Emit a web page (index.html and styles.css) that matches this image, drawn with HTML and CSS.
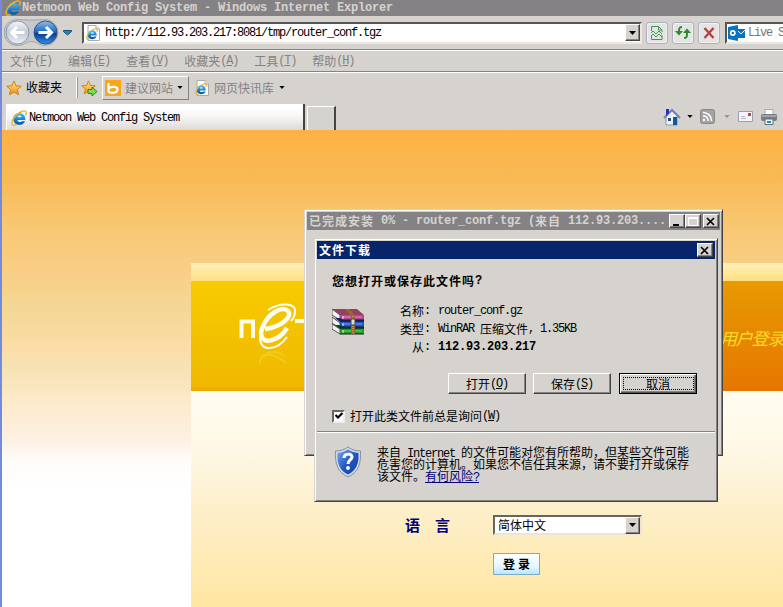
FILE: index.html
```html
<!DOCTYPE html>
<html lang="zh-CN">
<head>
<meta charset="utf-8">
<title>Netmoon Web Config System</title>
<link rel="stylesheet" href="styles.css">
</head>
<body>
<svg width="0" height="0" class="defs">
  <defs>
    <linearGradient id="ieBlue" x1="0" y1="0" x2="0" y2="1"><stop offset="0" stop-color="#48bdf2"/><stop offset=".5" stop-color="#118be0"/><stop offset="1" stop-color="#0552a5"/></linearGradient>
    <linearGradient id="gold" x1="0" y1="0" x2="0" y2="1"><stop offset="0" stop-color="#fff08a"/><stop offset="1" stop-color="#f58a10"/></linearGradient>
    <symbol id="ie" viewBox="0 0 16 16">
      <path d="M14.300 10H6.500c.3 2.600 3.300 2.500 4.200 1.200h3.400C12.200 16.500 2.300 16.300 2.300 9 2.300 1 14.800 1 14.300 10M6.500 7.300h4C10.200 5 6.800 5 6.500 7.300" fill="url(#ieBlue)" fill-rule="evenodd"/>
      <path d="M14.500 5.500C16.500 1.200 14.300-.3 9.700 2 4 4.700-.5 11.500 1.300 14.500c.8 1.300 2.900.5 4.200-.2" fill="none" stroke="#f0b325" stroke-width="1.400"/>
    </symbol>
    <symbol id="iepage" viewBox="0 0 14 16">
      <path d="M2 .5h8l3.500 3.500v11.500H2z" fill="#fff" stroke="#aaa"/><path d="M10 .5V4h3.500" fill="#eee" stroke="#aaa"/>
      <use href="#ie" x="0" y="3" width="12" height="12"/>
    </symbol>
    <symbol id="star" viewBox="0 0 16 16"><path d="M8 1l2 4.800 5.200.4-3.900 3.400 1.200 5.100L8 12l-4.500 2.700 1.200-5.100L.8 6.200 6 5.800z" fill="url(#gold)" stroke="#c98312" stroke-linejoin="round"/></symbol>
    <symbol id="arrow" viewBox="0 0 7 4"><path d="M0 0h7L3.500 4z" fill="currentColor"/></symbol>
    <symbol id="close" viewBox="0 0 10 9"><path d="M1 1l7 7M8 1L1 8" fill="none" stroke="#000" stroke-width="1.700"/></symbol>
  </defs>
</svg>
<div class="browser">
  <header class="titlebar"><svg class="i16"><use href="#ie"/></svg><b class="lb">Netmoon Web Config System - Windows Internet Explorer</b></header>

  <div class="address-row">
    <svg class="nav" width="72" height="30" viewBox="0 0 72 30">
      <defs>
        <linearGradient id="bk" x1="0" y1="0" x2="0" y2="1"><stop offset="0" stop-color="#f5f7f8"/><stop offset=".5" stop-color="#c2cad4"/><stop offset="1" stop-color="#e9f0f6"/></linearGradient>
        <linearGradient id="fw" x1="0" y1="0" x2="0" y2="1"><stop offset="0" stop-color="#91bce9"/><stop offset=".48" stop-color="#1c67bf"/><stop offset=".55" stop-color="#0a3e91"/><stop offset="1" stop-color="#3192e8"/></linearGradient>
      </defs>
      <path d="M13 1.500C20 1.500 22 2 27.500 2S35 1.500 41 1.500a13 13 0 0 1 0 26c-6 0-8-4-13.500-4s-7.500 4-14.500 4a13 13 0 0 1 0-26z" fill="#c5c8cc" stroke="#a2a6ad"/>
      <circle cx="13.500" cy="14.500" r="11.500" fill="url(#bk)" stroke="#8c98a8"/>
      <circle cx="41.500" cy="14.500" r="11.500" fill="url(#fw)" stroke="#315386"/>
      <path d="M20.500 14.500H8M13 9l-5.500 5.500 5.500 5.500" fill="none" stroke="#fff" stroke-width="3"/>
      <path d="M34.500 14.500H47M42 9l5.500 5.500-5.500 5.500" fill="none" stroke="#fff" stroke-width="3"/>
      <path d="M59.500 12.500h8v1l-4 3.500-4-3.500z" fill="#2c83b8" stroke="#124f78"/>
    </svg>
    <div class="field url"><svg width="14" height="16"><use href="#iepage"/></svg><span class="l">http://112.93.203.217:8081/tmp/router_conf.tgz</span><span class="drop"><svg width="7" height="4"><use href="#arrow"/></svg></span></div>
    <div class="tools">
      <span class="tool"><svg width="14" height="16" viewBox="0 0 14 16"><path d="M1.500 6V1.500h7l3.500 3.500v2M1.500 11v3.500H12V10M8.500 1.500V5H12M1 8l2-2 3 3 3-3 3 3M1 11l2-2 3 3 3-3 3 3" fill="none" stroke="#3b9a4c"/></svg></span>
      <span class="tool"><svg width="16" height="14" viewBox="0 0 16 14"><path d="M7 1C4 1 4 3 4 6M9 12c3 0 3-1 3-6" fill="none" stroke="#2c8a2c" stroke-width="2"/><path d="M0 5h8L4 9.500zM8 7h8l-4-4.500z" fill="#2c8a2c"/></svg></span>
      <span class="tool"><svg width="12" height="12" viewBox="0 0 12 12"><path d="M1.500 1l9 10M10.500 1l-9 10" stroke="#b53e3e" stroke-width="2.300"/></svg></span>
    </div>
    <div class="field search"><svg width="17" height="16" viewBox="0 0 17 16"><path d="M0 2l10-2v16L0 14zM10 4h7v9h-7z" fill="#0873c4"/><circle cx="4.800" cy="8" r="2.100" fill="none" stroke="#fff" stroke-width="1.700"/><path d="M10 6l3 3 4-4" fill="none" stroke="#fff"/></svg><span class="l">Live S</span></div>
  </div>

  <nav class="menu">
    <span>文件<i class="l">(<u>F</u>)</i></span><span>编辑<i class="l">(<u>E</u>)</i></span><span>查看<i class="l">(<u>V</u>)</i></span><span>收藏夹<i class="l">(<u>A</u>)</i></span><span>工具<i class="l">(<u>T</u>)</i></span><span>帮助<i class="l">(<u>H</u>)</i></span>
  </nav>

  <div class="favorites">
    <svg class="i16"><use href="#star"/></svg><span class="fav-label">收藏夹</span>
    <svg class="i16 add" viewBox="0 0 16 16"><use href="#star" width="15" height="15"/><path d="M7 9.500h4V7l5 4.500-5 4.500v-2.500H7z" fill="#7ddb4e" stroke="#278b20"/></svg>
    <span class="suggest"><svg class="i16" viewBox="0 0 16 16"><path d="M0 0h16v16H0z" fill="#f8a51b"/><path d="M3.500 3v9.500M4 8c3-2 8.500-1.500 8.500 1.500 0 4-8 4-9 2" fill="none" stroke="#fff" stroke-width="2.200"/></svg><span>建议网站</span><svg width="6" height="3"><use href="#arrow"/></svg></span>
    <svg class="page-icon" width="14" height="16"><use href="#iepage"/></svg><span class="gray">网页快讯库</span><svg class="last" width="6" height="3"><use href="#arrow"/></svg>
  </div>

  <div class="tabs">
    <div class="tab"><svg class="i16"><use href="#ie"/></svg><span class="l">Netmoon Web Config System</span></div>
    <div class="newtab"></div>
    <div class="commands">
      <svg width="18" height="18" viewBox="0 0 18 18"><path d="M3 9v8h11V8L9 3z" fill="#edf3fa" stroke="#8795b0"/><path d="M1 10l8-8 8 8" fill="none" stroke="#6c86b8" stroke-width="2"/><path d="M3 1h3v4L3 8z" fill="#2732b8"/><path d="M10 9h4v8h-4z" fill="#14579c"/><path d="M5 10h3v3H5z" fill="#344e78"/></svg>
      <svg class="c-arrow" width="6" height="3"><use href="#arrow"/></svg>
      <svg class="rss" width="15" height="15" viewBox="0 0 15 15"><rect x=".5" y=".5" width="14" height="14" rx="2" fill="#a3a3a3" stroke="#888"/><path d="M3 3.500c5 0 8.500 3.500 8.500 8.500M3 7c3 0 5 2 5 5" fill="none" stroke="#fff" stroke-width="1.600"/><circle cx="4" cy="11" r="1.200" fill="#fff"/></svg>
      <svg class="c-arrow dim" width="6" height="3"><use href="#arrow"/></svg>
      <svg class="mail" width="15" height="11" viewBox="0 0 15 11"><path d="M.5.5h14v10H.5z" fill="#f4f4fa" stroke="#9d9db3"/><path d="M10 2h3v3h-3z" fill="#c7414a"/><path d="M3 5.500h4M3 7.500h5" stroke="#b7b7c6"/></svg>
      <svg class="printer" width="16" height="16" viewBox="0 0 16 16"><path d="M4 .5h8V6H4z" fill="#fff" stroke="#aaa"/><rect y="5" width="16" height="7" rx="2" fill="#777b83"/><path d="M1 7h14" stroke="#c7cbd1"/><path d="M4 10h8v5.500H4z" fill="#e9f7fc" stroke="#66717b"/><path d="M6 12h4v2H6z" fill="#218db5"/></svg>
    </div>
  </div>

  <main class="page">
    <section class="login">
      <div class="strip"></div>
      <div class="banner">
        <svg class="logo" width="90" height="76" viewBox="0 0 90 76">
          <path d="M3.500 40V23.500h11.500V40" fill="none" stroke="#fffbe4" stroke-width="4"/>
          <path d="M27 31C43 29 55 19 50 13c-6-6-20 3-25 15-5 11 1 17 9 14 7-2 12-7 15-12" fill="none" stroke="#fffdf0" stroke-width="4.500"/>
          <path d="M30 12C42 4 58 5 57 13c0 4-2 8-4 10" fill="none" stroke="#fffdf0" stroke-width="2"/>
          <path d="M22 38c-1 17 17 15 27 1" fill="none" stroke="#fffdf0" stroke-width="2"/>
          <path d="M57 23h22M68 23v17" stroke="#fffbe4" stroke-width="4"/>
          <path d="M22 66c0-11 12-13 26-1M23 60c6-8 16-7 23-2" fill="none" stroke="#fadb4b" stroke-width="2" opacity=".4"/>
        </svg>
        <em class="user-login">用户登录</em>
      </div>
      <div class="form">
        <div class="language"><b>语言</b><div class="select"><span>简体中文</span><span class="drop"><svg width="7" height="4"><use href="#arrow"/></svg></span></div></div>
        <div class="submit">登录</div>
      </div>
    </section>
  </main>
</div>

<section class="window progress">
  <div class="caption inactive"><b><span class="cb">已完成安装</span><span class="lb"> 0% - router_conf.tgz (</span><span class="cb">来自</span><span class="lb"> 112.93.203....</span></b>
    <span class="wb"><svg width="10" height="9" viewBox="0 0 10 9"><path d="M1 7h6v2H1z"/></svg></span><span class="wb"><svg width="10" height="9" viewBox="0 0 10 9"><path d="M.5.5h9v8h-9zM0 1.500h10" fill="none" stroke="#fff"/></svg></span><span class="wb gap"><svg width="10" height="9"><use href="#close"/></svg></span>
  </div>
</section>

<section class="window download">
  <div class="caption"><b class="cb">文件下载</b><span class="wb"><svg width="10" height="9"><use href="#close"/></svg></span></div>
  <div class="content">
    <h1><span class="cb">您想打开或保存此文件吗</span><span class="lb">?</span></h1>
    <div class="file">
      <svg width="33" height="27" viewBox="0 0 33 27">
        <path d="M0 1l8 6v5L0 7zM0 9l8 6v5L0 15zM0 16l8 5v5L0 21z" fill="#f2f2f2" stroke="#333" stroke-width=".8"/>
        <path d="M0 1h25l7 6H8z" fill="#944064"/><path d="M8 7h24v5H8z" fill="#b8458d"/>
        <path d="M3 10h5l3 2h21v2H8z" fill="#17266b"/><path d="M8 14h24v5H8z" fill="#2355c7"/>
        <path d="M3 17h5l3 2h21v2H8z" fill="#0d4916"/><path d="M8 21h24v5H8z" fill="#209b25"/>
        <path d="M8 12h24M8 19h24M8 26h24" stroke="#161a20"/><path d="M10 9h20" stroke="#df91c4"/><path d="M10 16h20" stroke="#6f9df0"/><path d="M10 23h20" stroke="#65d75e"/>
        <path d="M13 1h4l6 6v19h-4V8z" fill="#9e642c"/><path d="M21 8v18" stroke="#e2bd70" stroke-dasharray="1 1"/><path d="M19 11h4v6h-4z" fill="#ddd" stroke="#444"/><path d="M11 8v17" stroke="#eee" stroke-dasharray="3 4"/>
      </svg>
      <dl><dt>名称<i class="l">:</i></dt><dd class="l">router_conf.gz</dd><dt>类型<i class="l">:</i></dt><dd><span class="l">WinRAR </span>压缩文件<span class="l">, 1.35KB</span></dd><dt>从<i class="l">:</i></dt><dd><b class="lb">112.93.203.217</b></dd></dl>
    </div>
    <div class="buttons"><div class="button">打开<span class="l">(<u>O</u>)</span></div><div class="button">保存<span class="l">(<u>S</u>)</span></div><div class="button default"><span>取消</span></div></div>
    <div class="ask"><span class="check"><svg width="8" height="8" viewBox="0 0 8 8"><path d="M.5 3l2.500 2.500L7.500 1" fill="none" stroke="#000" stroke-width="2.200"/></svg></span><span>打开此类文件前总是询问</span><span class="l">(<u>W</u>)</span></div>
  </div>
  <div class="notice">
    <svg width="28" height="32" viewBox="0 0 28 32"><defs><linearGradient id="sh" x1="0" y1="0" x2="1" y2="1"><stop stop-color="#7ca8f3"/><stop offset=".5" stop-color="#2459c6"/><stop offset="1" stop-color="#153a9a"/></linearGradient></defs><path d="M14 1c4 3 8 4 12.500 4C27 17 25 26 14 31 3 26 1 17 1.500 5 6 5 10 4 14 1z" fill="#d4dae2" stroke="#8290a3"/><path d="M14 3.500c4 2.500 6 3 10.500 3.500C25 17 23 24 14 28.500 5 24 3 17 3.500 7 8 6.500 10 6 14 3.500z" fill="url(#sh)"/><path d="M10 12c0-5 8-5 8-1 0 3-4 3-4 7" fill="none" stroke="#fff" stroke-width="3"/><circle cx="14" cy="22" r="1.900" fill="#fff"/></svg>
    <div class="advice"><p>来自<span class="l"> Internet </span>的文件可能对您有所帮助，但某些文件可能</p><p>危害您的计算机。如果您不信任其来源，请不要打开或保存</p><p>该文件。<a>有何风险<span class="l">?</span></a></p></div>
  </div>
</section>
</body>
</html>
```
FILE: styles.css
```css
* { box-sizing: border-box; }
html, body { margin: 0; width: 783px; height: 607px; overflow: hidden; }
body { position: relative; font: 12px/16px "Noto Sans CJK SC", sans-serif; color: #000; background: #d6d3ce; }
svg { display: block; flex: none; }
.defs { position: absolute; }
i { font-style: normal; }
.l { font-family: "Liberation Mono", monospace; font-size: 12px; letter-spacing: -1.2px; white-space: pre; }
.lb { font-family: "Liberation Mono", monospace; font-size: 12px; letter-spacing: -.2px; white-space: pre; }
.cb { letter-spacing: 1px; }
.i16 { width: 16px; height: 16px; }

.browser { width: 783px; height: 607px; display: flex; flex-direction: column; border-left: 2px solid #748bdc; }
.titlebar { height: 16px; display: flex; align-items: center; background: #848284; color: #d6d3ce; padding-left: 3px; gap: 1px; line-height: 14px; overflow: hidden; }
.titlebar b { padding-bottom: 1px; }
.address-row { height: 33px; display: flex; align-items: center; padding-left: 2px; }
.nav { width: 72px; margin-right: 6px; }
.field { height: 22px; display: flex; align-items: center; background: #fff; border: 2px solid; border-color: #555 #ece9e4 #ece9e4 #555; }
.url { width: 560px; flex: none; padding-left: 2px; gap: 5px; }
.drop { width: 15px; height: 17px; margin-left: auto; display: flex; align-items: center; justify-content: center; background: #d6d3ce; border: 1px solid; border-color: #fff #444 #444 #fff; box-shadow: inset -1px -1px #848284; }
.tools { display: flex; gap: 4px; margin: 0 5px 0 4px; }
.tool { width: 22px; height: 22px; display: flex; align-items: center; justify-content: center; background: #e5e4e5; border: 1px solid #afb2bd; border-radius: 3px; box-shadow: inset 0 0 0 1px #f2f1f2; }
.search { flex: 1; min-width: 0; border-right: 0; padding-left: 1px; gap: 3px; color: #777; white-space: nowrap; }
.menu { height: 23px; display: flex; gap: 16px; align-items: center; padding-left: 8px; color: #848284; border-top: 1px solid #848284; border-bottom: 1px solid #848284; box-shadow: inset 0 1px #fff, 0 1px #fff; }
.menu span { display: flex; }
.favorites { height: 31px; display: flex; align-items: center; padding-left: 4px; }
.fav-label { width: 51px; height: 21px; line-height: 20px; margin-left: 4px; border-right: 1px solid #fff; box-shadow: 1px 0 #999; }
.add { margin-left: 4px; }
.suggest { width: 87px; height: 24px; margin-left: 5px; padding-left: 2px; display: flex; align-items: center; gap: 4px; color: #848284; border: 1px solid; border-color: #fff #848284 #848284 #fff; }
.suggest svg:last-child { color: #000; }
.page-icon { margin: 0 5px 0 6px; }
.gray { color: #848284; }
.last { margin-left: 5px; }
.tabs { height: 27px; display: flex; align-items: flex-end; padding-left: 4px; }
.tab { width: 299px; height: 26px; display: flex; align-items: center; gap: 2px; padding: 1px 0 0 4px; background: linear-gradient(#fff 15%, #f7f4f5 50%, #dedad8); border-right: 2px solid #444; border-left: 1px solid #fff; }
.newtab { width: 29px; height: 24px; margin-left: 2px; border: 1px solid #fff; border-bottom: 0; border-right: 2px solid #444; }
.commands { height: 27px; display: flex; align-items: center; margin-left: 327px; }
.c-arrow { margin-left: 6px; }
.rss { margin-left: 7px; }
.dim { color: #949494; margin-left: 9px; }
.mail { margin-left: 8px; }
.printer { margin-left: 8px; }

.page { flex: 1; padding: 133px 0 0 189px; background: linear-gradient(#ffb143 0, #f8bb56 52px, #f8c875 100px, #f9cf88 145px, #f5d795 180px, #fbdda6 215px, #f6e3b6 242px, #fdebcd 275px, #fdf2e8 315px, #fffcf8 330px, #fff 360px); }
.login { height: 344px; display: flex; flex-direction: column; }
.strip { height: 18px; background: linear-gradient(#fff1b9, #ffdf80); }
.banner { height: 110px; display: flex; align-items: center; background: linear-gradient(#f8cb00, #efb900 95%, #eaa900); }
.logo { width: 90px; margin-left: 47px; }
.user-login { width: 255px; height: 110px; margin-left: auto; padding: 46px 0 0 192px; white-space: nowrap; font-size: 17px; line-height: 22px; letter-spacing: -1.2px; color: #ffda24; background: linear-gradient(#e89a00, #e67600); }
.form { flex: 1; padding: 124px 0 0 214px; background: linear-gradient(#fffcf0, #fff8e6 60px, #fdf0ce 110px, #ffe6a1); }
.language { display: flex; align-items: center; height: 20px; color: #00007b; }
.language b { width: 88px; font-size: 15px; letter-spacing: 15px; white-space: nowrap; }
.select { width: 149px; height: 20px; display: flex; align-items: center; color: #000; background: #fff; border: 2px solid; border-color: #66645f #ece5d4 #ece5d4 #66645f; padding-left: 3px; }
.submit { width: 47px; height: 22px; margin: 18px 0 0 88px; padding-left: 3px; text-align: center; font-weight: bold; line-height: 19px; letter-spacing: 3px; background: linear-gradient(#fff, #e8f6ff 60%, #bce5fc); border: 1px solid #79aeca; }

.window { position: absolute; background: #d6d3ce; border: 1px solid; border-color: #d6d3ce #444 #444 #d6d3ce; box-shadow: inset 1px 1px #fff, inset -1px -1px #848284; padding: 2px; }
.progress { left: 304px; top: 209px; width: 419px; height: 247px; }
.download { left: 314px; top: 238px; width: 404px; height: 264px; }
.caption { height: 18px; display: flex; align-items: center; background: #08246b; color: #fff; padding: 0 2px; white-space: nowrap; }
.caption b { flex: 1; min-width: 0; overflow: hidden; display: flex; }
.inactive { background: #848284; color: #d6d3ce; padding-right: 1px; }
.wb { flex: none; width: 16px; height: 14px; display: flex; align-items: center; justify-content: center; background: #d6d3ce; border: 1px solid; border-color: #fff #444 #444 #fff; box-shadow: inset -1px -1px #848284; }
.gap { margin-left: 2px; }
.content { height: 172px; padding: 14px 18px 0 15px; }
h1 { margin: 0; display: flex; font-size: 12px; line-height: 16px; }
.file { display: flex; margin-top: 13px; height: 54px; }
.file > svg { margin-top: 6px; }
dl { margin: 0 0 0 35px; display: grid; grid-template-columns: 30px 1fr; column-gap: 8px; grid-auto-rows: 18px; line-height: 18px; white-space: nowrap; }
dt { display: flex; justify-content: flex-end; }
dd { margin: 0; display: flex; }
.buttons { display: flex; justify-content: flex-end; gap: 7px; margin-top: 17px; }
.button { width: 78px; height: 21px; display: flex; align-items: center; justify-content: center; border: 1px solid; border-color: #fff #444 #444 #fff; box-shadow: inset -1px -1px #848284; }
.default { margin-left: 1px; border-color: #000; box-shadow: inset 1px 1px #fff, inset -1px -1px #555, inset -2px -2px #848284; }
.default span { width: 71px; height: 13px; line-height: 11px; text-align: center; border: 1px dotted #000; }
.ask { display: flex; align-items: center; margin-top: 14px; }
.check { width: 13px; height: 13px; margin-right: 5px; display: flex; align-items: center; justify-content: center; background: #fff; border: 2px solid; border-color: #666 #eee #eee #666; }
.notice { height: 68px; display: flex; border-top: 1px solid #848284; box-shadow: inset 0 1px #fff; padding: 14px 0 0 17px; }
.advice { margin-left: 15px; }
.advice p { margin: 0; height: 12px; line-height: 12px; white-space: nowrap; }
.advice .l { line-height: 10px; }
.notice a { color: #00007b; text-decoration: underline; }
```
